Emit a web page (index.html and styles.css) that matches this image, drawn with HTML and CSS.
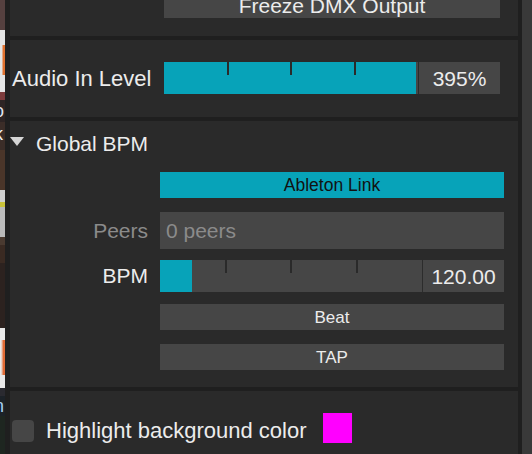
FILE: index.html
```html
<!DOCTYPE html>
<html>
<head>
<meta charset="utf-8">
<link rel="stylesheet" href="styles.css">
</head>
<body>
<div class="app">
  <div class="bgstrip">
    <div class="s s1"></div>
    <div class="s s2"></div>
    <div class="s s3"></div>
    <div class="s s4"></div>
    <div class="s s5"></div>
    <div class="s s6"><span class="g go">o</span></div>
    <div class="s s7"><span class="g gk">k</span></div>
    <div class="s s8"></div>
    <div class="s s9"></div>
    <div class="s s10"></div>
    <div class="s s11"></div>
    <div class="s s12"></div>
    <div class="s s13"><span class="g gt">t</span></div>
    <div class="s s14"></div>
    <div class="s s15"></div>
    <div class="s s16"></div>
    <div class="s s17"></div>
    <div class="s s18"></div>
    <div class="s s19"><span class="g gn">n</span></div>
    <div class="s s20"></div>
  </div>

  <div class="panel">
    <section class="sec sec-freeze">
      <div class="btn btn-freeze">Freeze DMX Output</div>
    </section>

    <section class="sec sec-audio">
      <div class="arow">
        <span class="alabel">Audio In Level</span>
        <div class="slider">
          <div class="track">
            <div class="fill" style="width: 252px"></div>
            <i class="tick t1"></i><i class="tick t2"></i><i class="tick t3"></i>
          </div>
          <div class="divider"></div>
          <div class="value">395%</div>
        </div>
      </div>
    </section>

    <section class="sec sec-bpm">
      <div class="hdr">
        <svg class="tri" width="14" height="9" viewBox="0 0 14 9"><polygon points="0,0 14,0 7,9" fill="#d6d6d6"/></svg>
        <span class="hdr-text">Global BPM</span>
      </div>

      <div class="frow r-link">
        <span></span>
        <div class="btn btn-link">Ableton Link</div>
      </div>

      <div class="frow r-peers">
        <span class="flabel dim">Peers</span>
        <div class="field">0 peers</div>
      </div>

      <div class="frow r-bpm">
        <span class="flabel">BPM</span>
        <div class="slider">
          <div class="track">
            <div class="fill" style="width: 32px"></div>
            <i class="tick t1"></i><i class="tick t2"></i><i class="tick t3"></i>
          </div>
          <div class="divider"></div>
          <div class="value">120.00</div>
        </div>
      </div>

      <div class="frow r-beat">
        <span></span>
        <div class="btn btn-small">Beat</div>
      </div>

      <div class="frow r-tap">
        <span></span>
        <div class="btn btn-small">TAP</div>
      </div>
    </section>

    <section class="sec sec-hl">
      <div class="hlrow">
        <span class="checkbox"></span>
        <span class="hltext">Highlight background color</span>
        <span class="swatch"></span>
      </div>
    </section>
  </div>

  <div class="scrollbar"></div>
</div>
</body>
</html>
```

FILE: styles.css
```css
html, body {
  margin: 0;
  padding: 0;
  background: #1f1f1f;
  overflow: hidden;
}

body {
  font-family: "Liberation Sans", Arial, sans-serif;
  color: #ececec;
}

.app {
  display: flex;
  width: 532px;
  height: 454px;
  overflow: hidden;
}

/* sliver of the window behind */
.bgstrip {
  width: 5px;
  flex: none;
  display: flex;
  flex-direction: column;
  overflow: hidden;
}
.s { flex: none; width: 5px; overflow: hidden; position: relative; }
.s1 { height: 30px; background: #55403f; }
.s2 { height: 15px; background: #e4e4e4; }
.s3 { height: 30px; background: linear-gradient(to right, #e4e4e4 30%, #e0712f 70%); }
.s4 { height: 17px; background: #e4e4e4; }
.s5 { height: 8px; background: #7c3b3c; }
.s6 { height: 22px; background: #2d2424; }
.s7 { height: 28px; background: #3b2d28; }
.s8 { height: 40px; background: #4a3529; }
.s9 { height: 12px; background: #cfcfcf; }
.s10 { height: 5px; background: #c9c23a; }
.s11 { height: 30px; background: #b9b9b9; }
.s12 { height: 8px; background: #4a3a30; }
.s13 { height: 18px; background: #3a2a22; }
.s14 { height: 65px; background: #2c221f; }
.s15 { height: 12px; background: #e8e8e8; }
.s16 { height: 35px; background: linear-gradient(to right, #e8e8e8 20%, #e06a35 70%); }
.s17 { height: 13px; background: #e8e8e8; }
.s18 { height: 8px; background: #2a2a30; }
.s19 { height: 20px; background: #1c2228; }
.s20 { height: 40px; background: #1e2620; }

.g {
  display: block;
  font-size: 18px;
  line-height: 20px;
  margin-left: -6px;
}
.go { color: #dfe6f0; line-height: 22px; }
.gk { color: #f0f0f0; line-height: 24px; }
.gt { color: #f09a2a; line-height: 18px; }
.gn { color: #a8d0f0; line-height: 20px; }

.panel {
  flex: 1;
  background: #1f1f1f;
  padding: 0 4px 0 5px;
  display: flex;
  flex-direction: column;
  gap: 4px;
}

.scrollbar {
  width: 10px;
  flex: none;
  background: #393939;
}

.sec {
  background: #2a2a2a;
  flex: none;
}

.btn {
  background: #464646;
  color: #ececec;
  text-align: center;
}

/* section 1 */
.sec-freeze {
  padding: 0 18px 18px 154px;
}
.btn-freeze {
  height: 26px;
  line-height: 28px;
  margin-top: -8px;
  font-size: 21px;
}

/* section 2 */
.sec-audio {
  padding: 22px 18px 23px 2px;
}
.arow {
  display: flex;
  height: 32px;
}
.alabel {
  width: 152px;
  flex: none;
  font-size: 22px;
  line-height: 33px;
}

.slider {
  flex: 1;
  display: flex;
  height: 32px;
}
.track {
  flex: 1;
  position: relative;
  background: #464646;
}
.fill {
  height: 100%;
  background: #07a3b9;
}
.tick {
  position: absolute;
  top: 0;
  width: 2px;
  height: 13px;
  background: #2a2a2a;
  margin-left: -1px;
}
.t1 { left: 25%; }
.t2 { left: 50%; }
.t3 { left: 75%; }
.divider {
  width: 1px;
  background: #2c2c2c;
  flex: none;
}
.value {
  width: 81px;
  flex: none;
  background: #464646;
  text-align: center;
  font-size: 21px;
  line-height: 33px;
}

/* section 3 */
.sec-bpm {
  padding: 10px 14px 17px 0;
}
.hdr {
  display: flex;
  align-items: flex-start;
  height: 24px;
}
.tri {
  margin-top: 6px;
  flex: none;
}
.hdr-text {
  margin-left: 12px;
  font-size: 21px;
  line-height: 25px;
}

.frow {
  display: grid;
  grid-template-columns: 138px 1fr;
  column-gap: 12px;
}
.flabel {
  text-align: right;
  font-size: 21px;
}
.dim { color: #8b8b8b; }

.r-link { margin-top: 17px; }
.btn-link {
  height: 26px;
  line-height: 27px;
  background: #07a3b9;
  color: #121212;
  font-size: 17.5px;
}

.r-peers { margin-top: 14px; height: 36px; }
.r-peers .flabel { line-height: 37px; }
.field {
  background: #464646;
  color: #8b8b8b;
  font-size: 21px;
  line-height: 37px;
  padding-left: 6px;
}

.r-bpm { margin-top: 12px; height: 32px; }
.r-bpm .flabel { line-height: 32px; }

.r-beat { margin-top: 12px; }
.r-tap { margin-top: 14px; }
.btn-small {
  height: 26px;
  line-height: 27px;
  font-size: 17px;
}

/* section 4 */
.sec-hl {
  flex: 1;
  padding: 22px 0 0 2px;
}
.hlrow {
  display: flex;
  align-items: flex-start;
}
.checkbox {
  width: 22px;
  height: 22px;
  margin-top: 7px;
  border-radius: 4px;
  background: #464646;
  flex: none;
}
.hltext {
  margin-left: 12px;
  margin-top: 3px;
  font-size: 22px;
  line-height: 30px;
}
.swatch {
  width: 29px;
  height: 30px;
  margin-left: 16px;
  background: #ff00ff;
  flex: none;
}
```
